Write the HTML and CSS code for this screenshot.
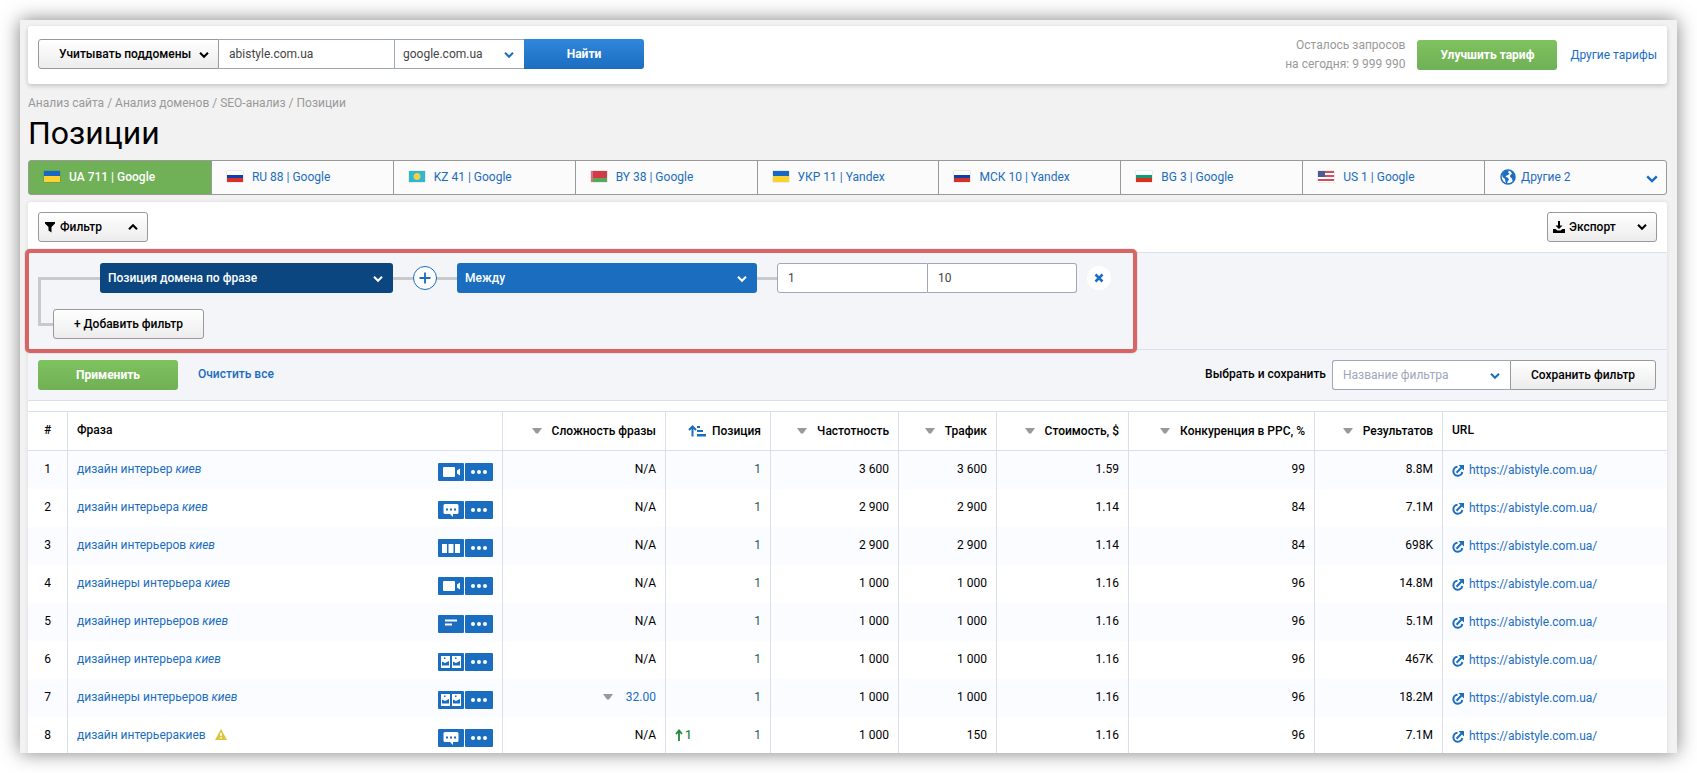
FILE: index.html
```html
<!DOCTYPE html>
<html lang="ru">
<head>
    <meta charset="UTF-8">
    <meta name="viewport" content="width=device-width, initial-scale=1.0">
    <title>Позиции</title>
    <link rel="stylesheet" href="styles.css">
</head>
<body>
    <svg class="sprite" aria-hidden="true">
        <symbol id="i-down" viewBox="0 0 10 8"><path d="M1 1.8l4 4 4-4" fill="none" stroke="currentColor" stroke-width="2"/></symbol>
        <symbol id="i-up" viewBox="0 0 10 8"><path d="M1 6.2l4-4 4 4" fill="none" stroke="currentColor" stroke-width="2"/></symbol>
        <symbol id="i-sort" viewBox="0 0 10 6"><path d="M0 0h10L6 5.5H4z" fill="currentColor"/></symbol>
        <symbol id="i-video" viewBox="0 0 26 18"><rect x="5" y="4" width="12" height="10" rx="1"/><path d="M19 7.500l3-2v7l-3-2z"/></symbol>
        <symbol id="i-chat" viewBox="0 0 26 18"><path d="M7 3h12a1.500 1.500 0 0 1 1.500 1.500v7a1.500 1.500 0 0 1-1.500 1.500h-4v3l-3-3H7a1.500 1.500 0 0 1-1.500-1.500v-7A1.500 1.500 0 0 1 7 3z"/><path class="cut" d="M8 7.500h2v2H8zM12 7.500h2v2h-2zM16 7.500h2v2h-2z"/></symbol>
        <symbol id="i-cols" viewBox="0 0 26 18"><path d="M4 5h5v9H4zM10.500 5h5v9h-5zM17 5h5v9h-5z"/></symbol>
        <symbol id="i-lines" viewBox="0 0 26 18"><path d="M7 4.500h12v2H7zM7 8.500h7v2H7z"/></symbol>
        <symbol id="i-pics" viewBox="0 0 26 18"><path d="M3 3h9v12H3zM14 3h9v12h-9z"/><path class="cut" d="M4 8.500l3 1.500 4-2v4.500H4zM15 8.500l3 1.500 4-2v4.500h-7zM6 4.500h1.500V6H6zM17 4.500h1.500V6H17z"/></symbol>
        <symbol id="i-dots" viewBox="0 0 28 18"><circle cx="8" cy="9" r="2"/><circle cx="14" cy="9" r="2"/><circle cx="20" cy="9" r="2"/></symbol>
        <symbol id="i-ext" viewBox="0 0 12 12"><path d="M5.500 1.700A4.500 4.500 0 1 0 10.300 7" fill="none" stroke="currentColor" stroke-width="2"/><path d="M4.500 7.800L9.500 2.500" stroke="currentColor" stroke-width="2"/><path d="M6.500 0H12v5.500z" fill="currentColor"/></symbol>
    </svg>

    <div class="page">
        <form class="topbar">
            <div class="search">
                <span class="select select-btn">
                    <select aria-label="Поддомены"><option>Учитывать поддомены</option></select>
                    <svg><use href="#i-down"/></svg>
                </span>
                <input class="domain" type="text" value="abistyle.com.ua" aria-label="Домен">
                <span class="select select-engine">
                    <select aria-label="Поисковая система"><option>google.com.ua</option></select>
                    <svg><use href="#i-down"/></svg>
                </span>
                <button type="button" class="btn-find">Найти</button>
            </div>
            <p class="limits">Осталось запросов<br>на сегодня: 9 999 990</p>
            <button type="button" class="btn-green">Улучшить тариф</button>
            <a href="#">Другие тарифы</a>
        </form>

        <nav class="crumbs"><a href="#">Анализ сайта</a> / <a href="#">Анализ доменов</a> / <a href="#">SEO-анализ</a> / Позиции</nav>
        <h1>Позиции</h1>

        <nav class="tabs">
            <a class="active" href="#"><i class="flag ua"></i>UA 711 | Google</a>
            <a href="#"><i class="flag ru"></i>RU 88 | Google</a>
            <a href="#"><i class="flag kz"></i>KZ 41 | Google</a>
            <a href="#"><i class="flag by"></i>BY 38 | Google</a>
            <a href="#"><i class="flag ua"></i>УКР 11 | Yandex</a>
            <a href="#"><i class="flag ru"></i>МСК 10 | Yandex</a>
            <a href="#"><i class="flag bg"></i>BG 3 | Google</a>
            <a href="#"><i class="flag us"></i>US 1 | Google</a>
            <a class="more" href="#">
                <svg class="globe" viewBox="0 0 16 16"><circle cx="8" cy="8" r="7" fill="#fff" stroke="#1b6dbf" stroke-width="1.500"/><path d="M2 5l3-3 4-.5-1 2 1.500 1L8 6 6.500 6.500 5.500 8l2 .5 1.500 2-1.500 2-.5 2.500-1.500-2-.5-3-2.500-2zM10.500 2l3 1.500 1.500 4-1 3.500-1.500 1-.5-2.500L10 8l.5-2.500 1.500-.5z" fill="#1b6dbf"/></svg>
                <span>Другие 2</span>
                <svg class="arrow"><use href="#i-down"/></svg>
            </a>
        </nav>

        <main class="panel">
            <div class="tools">
                <button type="button" class="btn-tool">
                    <svg class="ico" viewBox="0 0 12 12"><path d="M1 1h10v1.500L7.500 6v5.500L4.500 9.500V6L1 2.500z"/></svg>
                    <span>Фильтр</span>
                    <svg class="arrow"><use href="#i-up"/></svg>
                </button>
                <button type="button" class="btn-tool">
                    <svg class="ico" viewBox="0 0 12 12"><path d="M5 0h2v4.500h2.500L6 8 2.500 4.500H5z"/><path d="M0 8h2.500l2 1.500h3l2-1.500H12v4H0z"/></svg>
                    <span>Экспорт</span>
                    <svg class="arrow"><use href="#i-down"/></svg>
                </button>
            </div>

            <form class="filters">
                <div class="highlight"></div>
                <div class="rule">
                    <span class="select select-field">
                        <select aria-label="Поле"><option>Позиция домена по фразе</option></select>
                        <svg><use href="#i-down"/></svg>
                    </span>
                    <button type="button" class="btn-plus" aria-label="Добавить условие">
                        <svg viewBox="0 0 24 24"><path d="M12 6v12M6 12h12" stroke="#1b6dbf" stroke-width="2"/></svg>
                    </button>
                    <span class="select select-cond">
                        <select aria-label="Условие"><option>Между</option></select>
                        <svg><use href="#i-down"/></svg>
                    </span>
                    <div class="range">
                        <input type="text" value="1" aria-label="От">
                        <input type="text" value="10" aria-label="До">
                    </div>
                    <button type="button" class="btn-close" aria-label="Удалить">
                        <svg viewBox="0 0 24 24"><path d="M8.500 8.500l7 7M15.500 8.500l-7 7" stroke="#1b6dbf" stroke-width="2.500"/></svg>
                    </button>
                </div>
                <button type="button" class="btn-add">+ Добавить фильтр</button>
            </form>

            <form class="apply">
                <button type="button" class="btn-green">Применить</button>
                <a href="#">Очистить все</a>
                <label for="saved">Выбрать и сохранить</label>
                <div class="save">
                    <span class="select select-saved">
                        <select id="saved"><option>Название фильтра</option></select>
                        <svg><use href="#i-down"/></svg>
                    </span>
                    <button type="button">Сохранить фильтр</button>
                </div>
            </form>

            <table>
                <colgroup>
                    <col class="c-num"><col><col class="c-kd"><col class="c-pos"><col class="c-vol"><col class="c-traf"><col class="c-cost"><col class="c-ppc"><col class="c-res"><col class="c-url">
                </colgroup>
                <thead>
                    <tr>
                        <th class="num">#</th>
                        <th class="left">Фраза</th>
                        <th><svg class="sort"><use href="#i-sort"/></svg>Сложность фразы</th>
                        <th><svg class="sorted" viewBox="0 0 18 12"><path d="M4.500 11.500V1.500M1 5l3.500-3.500L8 5" fill="none" stroke="currentColor" stroke-width="2"/><path d="M9 1h3v2H9zM9 5h6v2H9zM9 9h9v2.500H9z" fill="currentColor"/></svg>Позиция</th>
                        <th><svg class="sort"><use href="#i-sort"/></svg>Частотность</th>
                        <th><svg class="sort"><use href="#i-sort"/></svg>Трафик</th>
                        <th><svg class="sort"><use href="#i-sort"/></svg>Стоимость, $</th>
                        <th><svg class="sort"><use href="#i-sort"/></svg>Конкуренция в PPC, %</th>
                        <th><svg class="sort"><use href="#i-sort"/></svg>Результатов</th>
                        <th class="left">URL</th>
                    </tr>
                </thead>
                <tbody id="rows"></tbody>
            </table>
        </main>
    </div>
    <script src="script.js"></script>
</body>
</html>
```

FILE: styles.css
```css
* {
    box-sizing: border-box;
}
body {
    margin: 0;
    padding: 20px;
    height: 100vh;
    overflow: hidden;
    background: #fff;
    font-family: Roboto, "Liberation Sans", sans-serif;
    font-size: 12px;
    line-height: 18px;
    color: #000;
}
button, input, select {
    font: inherit;
    color: inherit;
    margin: 0;
    height: 30px;
    border: 1px solid #999;
    border-radius: 3px;
}
button {
    padding: 0;
    cursor: pointer;
}
a {
    color: #1b6dbf;
    text-decoration: none;
}
.sprite {
    display: none;
}
.page {
    height: 100%;
    overflow: hidden;
    padding: 6px 10px 0 8px;
    background: #f2f2f2;
    box-shadow: 0 0 18px rgba(0, 0, 0, 0.5);
}

/* dropdowns */
.select {
    position: relative;
    display: block;
}
.select select {
    appearance: none;
    display: block;
    width: 100%;
    background: #fff;
    padding: 0 8px;
}
.select svg {
    position: absolute;
    right: 10px;
    top: 12px;
    width: 10px;
    height: 8px;
    color: #1b6dbf;
    pointer-events: none;
}

/* top bar */
.topbar {
    display: flex;
    align-items: center;
    height: 58px;
    padding: 0 10px;
    background: #fff;
    border-radius: 3px;
    box-shadow: 0 2px 5px rgba(0, 0, 0, 0.2);
}
.search {
    display: flex;
    margin: 0 auto 2px 0;
}
.select-btn {
    width: 181px;
}
.select-btn select {
    padding-left: 20px;
    background: linear-gradient(#fff, #ececec);
    border-radius: 3px 0 0 3px;
    font-weight: 500;
}
.select-btn svg {
    color: #000;
}
.domain {
    width: 176px;
    padding: 0 10px;
    border-color: #a0a6bc;
    border-left: 0;
    border-radius: 0;
    color: #444;
}
.select-engine {
    width: 129px;
}
.select-engine select {
    border-color: #a0a6bc;
    border-left: 0;
    border-right: 0;
    border-radius: 0;
    color: #444;
}
.btn-find {
    width: 120px;
    border: 0;
    border-radius: 0 3px 3px 0;
    background: linear-gradient(#3087dc, #1b6dbf);
    color: #fff;
    font-weight: 700;
}
.limits {
    margin: 0 12px 0 0;
    line-height: 19px;
    text-align: right;
    color: #999;
}
.btn-green {
    width: 140px;
    border: 0;
    background: linear-gradient(#7fc25f, #70b056);
    color: #fff;
    font-weight: 700;
}
.topbar .btn-green {
    margin-right: 13px;
}

.crumbs {
    margin-top: 10px;
    color: #999;
}
.crumbs a {
    color: inherit;
}
h1 {
    margin: 2px 0 8px;
    font-size: 32px;
    line-height: 38px;
    font-weight: 400;
}

/* region tabs */
.tabs {
    display: grid;
    grid-template-columns: repeat(9, 1fr);
    height: 35px;
    border: 1px solid #999;
    border-radius: 3px;
    background: #fbfbfb;
}
.tabs a {
    display: flex;
    align-items: center;
    padding: 0 0 2px 15px;
}
.tabs a + a {
    border-left: 1px solid #999;
}
.tabs .active {
    background: #70b056;
    color: #fff;
    font-weight: 500;
}
.flag {
    width: 16px;
    height: 11px;
    margin-right: 9px;
    box-shadow: 0 0 1px rgba(0, 0, 0, 0.4);
}
.ua {
    background: linear-gradient(#1767c9 50%, #fdd22f 50%);
}
.ru {
    background: linear-gradient(#fff 33%, #0f3fa8 33%, #0f3fa8 66%, #d6302c 66%);
}
.kz {
    background: radial-gradient(circle, #f3cf4a 3px, #2fb9cf 4px);
}
.by {
    background: linear-gradient(90deg, #d9737a 2px, transparent 2px), linear-gradient(#d23a48 66%, #53a85a 66%);
}
.bg {
    background: linear-gradient(#fff 33%, #109a78 33%, #109a78 66%, #d8301c 66%);
}
.us {
    background: linear-gradient(#4c5a94, #4c5a94) 0 0 / 7px 6px no-repeat, repeating-linear-gradient(#d24d5c 0 2px, #fff 2px 4px);
}
.globe {
    width: 16px;
    height: 16px;
    margin-right: 5px;
}
.tabs .arrow {
    width: 12px;
    height: 10px;
    margin: 4px 8px 0 auto;
}

.panel {
    margin-top: 7px;
    background: #fff;
    border-radius: 3px;
    box-shadow: 0 0 4px rgba(0, 0, 0, 0.1);
}
.tools {
    display: flex;
    justify-content: space-between;
    padding: 10px;
}
.btn-tool {
    display: flex;
    align-items: center;
    width: 110px;
    padding: 0 9px 0 5px;
    background: linear-gradient(#fff, #ececec);
    font-weight: 500;
}
.btn-tool .ico {
    width: 12px;
    height: 12px;
    margin-right: 4px;
}
.btn-tool .arrow {
    width: 10px;
    height: 8px;
    margin-left: auto;
}

/* filter builder */
.filters {
    position: relative;
    height: 97px;
    padding: 10px;
    border-top: 1px solid #d9dfed;
    background: #f4f5f9;
}
.filters::before {
    content: "";
    position: absolute;
    left: 10px;
    top: 24px;
    width: 62px;
    height: 43px;
    border: 3px solid #c9c9cc;
    border-right: 0;
}
.highlight {
    position: absolute;
    left: -3px;
    top: -4px;
    width: 1112px;
    height: 104px;
    border: 4px solid #d86464;
    border-radius: 5px;
    box-shadow: 0 0 1px #555;
    pointer-events: none;
    z-index: 1;
}
.rule {
    position: relative;
    display: flex;
    align-items: center;
    width: 1011px;
    margin-left: 62px;
    background: linear-gradient(#c9c9cc, #c9c9cc) 0 14px / 700px 3px no-repeat;
}
.rule select {
    border: 0;
    color: #fff;
    font-weight: 500;
}
.rule .select svg {
    color: #fff;
}
.select-field {
    width: 293px;
}
.select-field select {
    background: #0b4680;
}
.select-cond {
    width: 300px;
}
.select-cond select {
    background: #1b6dbf;
}
.btn-plus, .btn-close {
    width: 24px;
    height: 24px;
    border-radius: 50%;
    background: #fff;
}
.btn-plus svg, .btn-close svg {
    display: block;
    width: 100%;
    height: 100%;
}
.btn-plus {
    margin: 0 20px;
    border-color: #1b6dbf;
}
.btn-close {
    margin-left: 10px;
    border: 0;
}
.range {
    display: flex;
    width: 300px;
    margin-left: 20px;
}
.range input {
    width: 151px;
    padding: 0 10px;
    border-color: #a0a6bc;
    border-radius: 3px 0 0 3px;
    color: #444;
}
.range input + input {
    width: 149px;
    border-left: 0;
    border-radius: 0 3px 3px 0;
}
.btn-add {
    position: relative;
    display: block;
    width: 151px;
    margin: 16px 0 0 15px;
    background: linear-gradient(#fff, #ececec);
    font-weight: 500;
}

.apply {
    display: flex;
    align-items: center;
    padding: 10px;
    border: solid #d9dfed;
    border-width: 1px 0;
    background: #f4f5f9;
}
.apply a {
    margin: 0 auto 0 20px;
    padding-bottom: 2px;
    font-weight: 500;
}
.apply label {
    margin-right: 6px;
    padding-bottom: 2px;
    font-weight: 500;
}
.save {
    display: flex;
    margin-right: 1px;
}
.select-saved {
    width: 178px;
}
.select-saved select {
    padding-left: 10px;
    border-color: #a0a6bc;
    border-right: 0;
    border-radius: 3px 0 0 3px;
    color: #a0a6bc;
}
.save button {
    width: 146px;
    border-radius: 0 3px 3px 0;
    background: linear-gradient(#fff, #ececec);
    font-weight: 500;
}

/* keywords table */
table {
    width: 100%;
    margin-top: 10px;
    table-layout: fixed;
    border-collapse: separate;
    border-spacing: 0;
}
th, td {
    height: 38px;
    padding: 0 9px 2px;
    text-align: right;
    white-space: nowrap;
    border-left: 1px solid #d9dfed;
}
th {
    height: 40px;
    padding-bottom: 0;
    border-top: 1px solid #d9dfed;
    border-bottom: 1px solid #d9dfed;
    font-weight: 500;
}
th.num, th.left {
    padding-bottom: 2px;
}
th:first-child, td:first-child {
    border-left: 0;
}
tbody tr:nth-child(odd) {
    background: #fafcff;
}
.num {
    text-align: center;
}
.left {
    text-align: left;
}
td.url {
    padding-bottom: 0;
}
.c-num { width: 39px; }
.c-kd { width: 163px; }
.c-pos { width: 105px; }
.c-vol { width: 128px; }
.c-traf { width: 98px; }
.c-cost { width: 132px; }
.c-ppc { width: 186px; }
.c-res { width: 128px; }
.c-url { width: 225px; }
.sort {
    width: 10px;
    height: 6px;
    margin-right: 10px;
    vertical-align: 1px;
    color: #999;
}
td .sort {
    margin-right: 13px;
}
.sorted {
    width: 18px;
    height: 12px;
    margin-right: 6px;
    vertical-align: -2px;
    color: #1b6dbf;
}
.cell {
    display: flex;
    align-items: center;
    justify-content: space-between;
}
.warn {
    width: 12px;
    height: 11px;
    margin-left: 9px;
    vertical-align: -1px;
}
.features {
    display: flex;
    gap: 1px;
    margin: 4px 0 0;
}
.features button {
    width: 26px;
    height: 18px;
    border: 0;
    border-radius: 1px;
    background: #1b6dbf;
}
.features button + button {
    width: 28px;
}
.features svg {
    display: block;
    width: 100%;
    height: 100%;
    fill: #fff;
}
.cut {
    fill: #1b6dbf;
}
.phrase {
    padding-bottom: 0;
}
.phrase a {
    margin-bottom: 2px;
}
.up {
    display: flex;
    align-items: center;
    color: #1f8a3c;
    font-weight: 500;
}
.up svg {
    width: 8px;
    height: 12px;
    margin-right: 2px;
}
.position {
    margin-left: auto;
    color: #1f5560;
}
.ext {
    width: 12px;
    height: 12px;
    margin-right: 5px;
    vertical-align: -3px;
}
```

FILE: script.js
```js
const rows = [
    { phrase: 'дизайн интерьер', city: 'киев', icon: 'video', vol: '3 600', traf: '3 600', cost: '1.59', ppc: 99, res: '8.8M' },
    { phrase: 'дизайн интерьера', city: 'киев', icon: 'chat', vol: '2 900', traf: '2 900', cost: '1.14', ppc: 84, res: '7.1M' },
    { phrase: 'дизайн интерьеров', city: 'киев', icon: 'cols', vol: '2 900', traf: '2 900', cost: '1.14', ppc: 84, res: '698K' },
    { phrase: 'дизайнеры интерьера', city: 'киев', icon: 'video', vol: '1 000', traf: '1 000', cost: '1.16', ppc: 96, res: '14.8M' },
    { phrase: 'дизайнер интерьеров', city: 'киев', icon: 'lines', vol: '1 000', traf: '1 000', cost: '1.16', ppc: 96, res: '5.1M' },
    { phrase: 'дизайнер интерьера', city: 'киев', icon: 'pics', vol: '1 000', traf: '1 000', cost: '1.16', ppc: 96, res: '467K' },
    { phrase: 'дизайнеры интерьеров', city: 'киев', icon: 'pics', kd: '32.00', vol: '1 000', traf: '1 000', cost: '1.16', ppc: 96, res: '18.2M' },
    { phrase: 'дизайн интерьеракиев', icon: 'chat', warn: true, up: 1, vol: '1 000', traf: '150', cost: '1.16', ppc: 96, res: '7.1M' },
];

const warnIcon = '<svg class="warn" viewBox="0 0 12 11"><path d="M6 0l6 11H0z" fill="#d9c63a"/><path d="M6 4v3M6 8v1.500" stroke="#fff" stroke-width="1.500"/></svg>';
const upIcon = '<svg viewBox="0 0 8 12"><path d="M4 12V1.500M1 5l3-3.500L7 5" fill="none" stroke="currentColor" stroke-width="1.800"/></svg>';

document.getElementById('rows').innerHTML = rows.map((row, i) => `
    <tr>
        <td class="num">${i + 1}</td>
        <td class="left phrase">
            <div class="cell">
                <a href="#">${row.phrase}${row.city ? ` <em>${row.city}</em>` : ''}${row.warn ? warnIcon : ''}</a>
                <div class="features">
                    <button type="button" aria-label="Элемент выдачи"><svg><use href="#i-${row.icon}"/></svg></button>
                    <button type="button" aria-label="Ещё"><svg><use href="#i-dots"/></svg></button>
                </div>
            </div>
        </td>
        <td>${row.kd ? `<svg class="sort"><use href="#i-sort"/></svg><a href="#">${row.kd}</a>` : 'N/A'}</td>
        <td><div class="cell">${row.up ? `<span class="up">${upIcon}${row.up}</span>` : ''}<span class="position">1</span></div></td>
        <td>${row.vol}</td>
        <td>${row.traf}</td>
        <td>${row.cost}</td>
        <td>${row.ppc}</td>
        <td>${row.res}</td>
        <td class="left url"><a href="#"><svg class="ext"><use href="#i-ext"/></svg>https://abistyle.com.ua/</a></td>
    </tr>`).join('');
```
